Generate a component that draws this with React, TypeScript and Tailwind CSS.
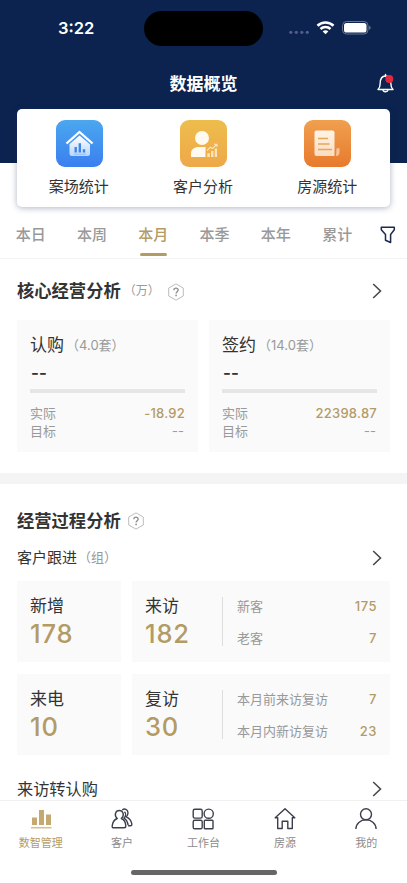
import { ReactNode } from "react"
import clsx from "clsx"

const periods = ["本日", "本周", "本月", "本季", "本年", "累计"]

const coreStats = [
  { title: "认购", count: "4.0套", total: "--", actual: "-18.92", target: "--" },
  { title: "签约", count: "14.0套", total: "--", actual: "22398.87", target: "--" },
]

const followStats = [
  {
    single: { label: "新增", value: "178" },
    main: { label: "来访", value: "182" },
    rows: [
      { label: "新客", value: "175" },
      { label: "老客", value: "7" },
    ],
  },
  {
    single: { label: "来电", value: "10" },
    main: { label: "复访", value: "30" },
    rows: [
      { label: "本月前来访复访", value: "7" },
      { label: "本月内新访复访", value: "23" },
    ],
  },
]

const StatusBar = () => (
  <div className="grid h-[56px] grid-cols-[144px_119px_1fr] text-white">
    <div className="pl-[58px] pt-[17px] text-[16.5px] font-semibold leading-[22px]">3:22</div>
    <div className="mt-[11px] h-[35px] rounded-full bg-black" />
    <div className="flex items-start pl-[26px] pt-[20px]">
      <svg width="21" height="16" viewBox="0 0 21 16" fill="#50608a">
        <circle cx="1.8" cy="12.3" r="1.6" />
        <circle cx="7.3" cy="12.3" r="1.6" />
        <circle cx="12.8" cy="12.3" r="1.6" />
        <circle cx="18.3" cy="12.3" r="1.6" />
      </svg>
      <svg className="ml-[6px]" width="20" height="16" viewBox="0 0 20 16" fill="none" stroke="#fff" strokeWidth="2.6">
        <path d="M1.5 5.7a11.6 11.6 0 0 1 16 0" />
        <path d="M4.5 9a7.2 7.2 0 0 1 10 0" />
        <path d="M9.5 14.2 6.7 11.5a3.8 3.8 0 0 1 5.6 0z" fill="#fff" stroke="none" />
      </svg>
      <svg className="ml-[6px]" width="30" height="16" viewBox="0 0 30 16">
        <rect x="0.5" y="1.5" width="25.5" height="12.5" rx="4" fill="none" stroke="#66738f" />
        <rect x="2" y="3" width="22.5" height="9.5" rx="2.6" fill="#fff" />
        <path d="M27.3 5.8v4c1.6-.6 1.6-3.4 0-4z" fill="#8893ab" />
      </svg>
    </div>
  </div>
)

const BellIcon = () => (
  <svg width="20" height="22" viewBox="0 0 20 22" fill="none" stroke="#fff" strokeWidth="1.4" strokeLinejoin="round" strokeLinecap="round">
    <path d="M2 16.5c1.8-1.6 2.2-3 2.2-6.2 0-4.3 1.8-7.3 5.3-7.3s5.3 3 5.3 7.3c0 3.2.4 4.6 2.2 6.2z" />
    <path d="M9.5 1.5v1.5M7 17c.3 2.3 4.700 2.3 5 0" />
    <circle cx="13.3" cy="6" r="4" fill="#e0293c" stroke="none" />
  </svg>
)

const HouseStatIcon = () => (
  <svg width="47" height="47" viewBox="0 0 47 47">
    <defs>
      <linearGradient id="blue" x1="0" y1="0" x2="0" y2="1">
        <stop offset="0" stopColor="#4ba7ee" />
        <stop offset="1" stopColor="#3a7ff0" />
      </linearGradient>
      <linearGradient id="house" x1="0" y1="0" x2="0" y2="1">
        <stop offset="0" stopColor="#fff" />
        <stop offset="1" stopColor="#b9d6fb" />
      </linearGradient>
    </defs>
    <rect width="47" height="47" rx="9" fill="url(#blue)" />
    <path d="M13.5 24 23.5 15.5 34 24v9.5a2.5 2.5 0 0 1-2.5 2.5H16a2.5 2.5 0 0 1-2.5-2.5z" fill="url(#house)" />
    <path d="M10.3 23.8 23.5 11.5 36.7 23.8" fill="none" stroke="#4a9cf0" strokeWidth="4.5" />
    <path d="M10.5 23.5 23.5 12 36.5 23.5" fill="none" stroke="#fff" strokeWidth="2.3" />
    <path d="M18.5 27h2.4v5.5h-2.4zM22.6 23.3H25v9.2h-2.4zM26.8 29.3h2.4v3.2h-2.4z" fill="#3f86e8" />
    <path d="M18 34.2h12" stroke="#8fbcf6" strokeWidth="0.9" />
  </svg>
)

const CustomerIcon = () => (
  <svg width="47" height="47" viewBox="0 0 47 47">
    <defs>
      <linearGradient id="yellow" x1="0" y1="0" x2="0" y2="1">
        <stop offset="0" stopColor="#edbd4c" />
        <stop offset="1" stopColor="#efa849" />
      </linearGradient>
    </defs>
    <rect width="47" height="47" rx="9" fill="url(#yellow)" />
    <circle cx="22" cy="18" r="7" fill="#fffaf0" />
    <path d="M11 37v-3.5c0-4.3 3.2-6.5 8-6.5h6.5v10z" fill="#fffaf0" />
    <path d="M27.3 33.3h2.5V37h-2.5zM31 31h2.5v6H31zM34.7 28.5h2.3V37h-2.3z" fill="#fbe4b9" />
    <path d="m27 30.5 3.5-3.3 2 1.3 4.2-4M34 24.3h3v2.8" fill="none" stroke="#fbe4b9" strokeWidth="1.1" />
  </svg>
)

const ListingIcon = () => (
  <svg width="47" height="47" viewBox="0 0 47 47">
    <defs>
      <linearGradient id="orange" x1="0" y1="0" x2="0" y2="1">
        <stop offset="0" stopColor="#efa04f" />
        <stop offset="1" stopColor="#e87a2c" />
      </linearGradient>
      <linearGradient id="paper" x1="0" y1="0" x2="0" y2="1">
        <stop offset="0" stopColor="#fff4e6" />
        <stop offset="1" stopColor="#fbdcc0" />
      </linearGradient>
    </defs>
    <rect width="47" height="47" rx="9" fill="url(#orange)" />
    <path d="M12.5 10.5h16a2 2 0 0 1 2 2V36h-18a2 2 0 0 1-2-2V12.500a2 2 0 0 1 2-2z" fill="url(#paper)" />
    <path d="M32.5 28.2h3v3.800c0 2.500-1 4-3.500 4z" fill="#f7c398" />
    <path d="M14 18.5h10M14 24h11.5M14 29.5h14" stroke="#e5a65c" strokeWidth="1.3" />
  </svg>
)

const shortcuts = [
  { label: "案场统计", icon: <HouseStatIcon /> },
  { label: "客户分析", icon: <CustomerIcon /> },
  { label: "房源统计", icon: <ListingIcon /> },
]

const FilterIcon = () => (
  <svg width="16" height="18" viewBox="0 0 16 18" fill="none" stroke="#1c2a4d" strokeWidth="1.5" strokeLinejoin="round">
    <path d="M1.3 1.2h13v2.6L10.6 8.5v8L5.5 14.3V8.5L1.3 3.8z" />
  </svg>
)

const HelpIcon = () => (
  <svg width="18" height="18" viewBox="0 0 18 18" fill="none">
    <path d="M9 .9 16.300 5v8L9 17.100 1.700 13V5z" stroke="#b5b5b5" strokeWidth="0.9" strokeLinejoin="round" />
    <path d="M6.900 7.200c0-2.700 4.300-2.700 4.300-.1 0 1.500-2.100 1.600-2.100 3.300" stroke="#8c8c8c" strokeWidth="1.3" />
    <circle cx="9.1" cy="12.4" r="0.85" fill="#8c8c8c" />
  </svg>
)

const Chevron = () => (
  <svg className="ml-auto" width="10" height="16" viewBox="0 0 10 16" fill="none" stroke="#4a4a4a" strokeWidth="1.6">
    <path d="m1.200 1 7.300 7-7.300 7" />
  </svg>
)

const ChartTabIcon = () => (
  <svg width="24" height="24" viewBox="0 0 24 24">
    <path d="M3 10.5h5V18H3zM10 3h5v15h-5zM17 7.5h5V18h-5z" fill="#c4a970" />
    <path d="M2 20.8h20.5" stroke="#c9b07c" strokeWidth="1.2" />
  </svg>
)

const CustomersTabIcon = () => (
  <svg width="24" height="24" viewBox="0 0 24 24" fill="none" stroke="#3c404c" strokeWidth="1.4" strokeLinejoin="round">
    <path d="M7.3 11.5C3.8 8.5 5.3 3.500 9.300 3.500s5.500 5 2 8c3 1.200 4.400 4 4.500 7.500 0 1.300-.6 1.800-1.800 1.800H3.800c-1.200 0-1.800-.5-1.600-1.700.4-3.600 2-6.600 5.100-7.600z" />
    <path d="M12.3 3c1.200-1.200 2.400-1.200 3.600-.7 2.800 1.300 2.600 5.300.4 7.600 3.300 1.500 5 4 5.500 7 .2 1.300-.3 1.800-1.400 1.800h-2.300M14.500 4.800c1.600 1.700 1.400 4.400-.6 6.300 2.500 1.500 3.800 4 4.200 7" />
  </svg>
)

const WorkbenchTabIcon = () => (
  <svg width="24" height="24" viewBox="0 0 24 24" fill="none" stroke="#3c404c" strokeWidth="1.4">
    <rect x="2.2" y="2.3" width="9" height="8.8" rx="1.6" />
    <circle cx="17.7" cy="6.7" r="4.6" />
    <rect x="2.2" y="13.2" width="9" height="8.6" rx="1.6" />
    <rect x="13.3" y="13.2" width="8.7" height="8.6" rx="0.8" />
  </svg>
)

const HomeTabIcon = () => (
  <svg width="24" height="24" viewBox="0 0 24 24" fill="none" stroke="#3c404c" strokeWidth="1.4" strokeLinejoin="round">
    <path d="m2.2 10.8 9.8-9 9.8 9h-2.500v10.700h-4.500v-7.300H9.200v7.300H4.700V10.800z" />
  </svg>
)

const MineTabIcon = () => (
  <svg width="24" height="24" viewBox="0 0 24 24" fill="none" stroke="#3c404c" strokeWidth="1.4">
    <circle cx="12" cy="7.3" r="5.5" />
    <path d="M1.9 22c0-5.300 4.500-9.200 10.100-9.200S22.100 16.700 22.100 22" />
  </svg>
)

const navItems = [
  { label: "数智管理", icon: <ChartTabIcon />, active: true },
  { label: "客户", icon: <CustomersTabIcon /> },
  { label: "工作台", icon: <WorkbenchTabIcon /> },
  { label: "房源", icon: <HomeTabIcon /> },
  { label: "我的", icon: <MineTabIcon /> },
]

const Unit = ({ children, small }: { children: ReactNode; small?: boolean }) => (
  <span className={clsx("font-normal text-[#999]", small ? "text-[12px]" : "text-[13px]")}>{children}</span>
)

const StatBlock = ({ label, value }: { label: string; value: string }) => (
  <>
    <div className="text-[17px] leading-[24px]">{label}</div>
    <div className="text-[25.5px] font-medium leading-[32px] tracking-[0.8px] text-[#b39b66]">{value}</div>
  </>
)

export default function App() {
  return (
    <div
      className="flex h-[883px] w-[407px] flex-col overflow-hidden bg-white text-[#333]"
      style={{ fontFamily: 'Inter, "Noto Sans CJK SC", sans-serif' }}
    >
      <header className="h-[163px] shrink-0 bg-[#0b234e]">
        <StatusBar />
        <div className="grid h-[55px] grid-cols-[1fr_auto_1fr] items-center pr-[11px]">
          <span />
          <h1 className="pl-[11px] pt-px text-[17px] font-bold leading-6 text-white">数据概览</h1>
          <div className="flex justify-end">
            <BellIcon />
          </div>
        </div>
      </header>

      <div className="relative mx-[17px] -mt-[54px] grid h-[98px] shrink-0 grid-cols-3 rounded-[5px] bg-white shadow-[0_1px_6px_rgba(30,40,90,0.35)]">
        {shortcuts.map((item) => (
          <div key={item.label} className="flex flex-col items-center pt-[11px]">
            {item.icon}
            <span className="mt-[9px] pr-px text-[15px] leading-[22px]">{item.label}</span>
          </div>
        ))}
      </div>

      <div className="flex h-[52px] shrink-0 items-start border-b border-[#f3f3f3] pr-[11px]">
        {periods.map((period) => {
          const active = period === "本月"
          return (
            <div
              key={period}
              className={clsx(
                "flex w-[61.3px] flex-col items-center pt-[17px] text-[15px] font-medium leading-[22px]",
                active ? "text-[#b39b66]" : "text-[#999]"
              )}
            >
              {period}
              {active && <div className="mt-[7px] h-[3px] w-[27px] rounded-full bg-[#b39b66]" />}
            </div>
          )
        })}
        <div className="ml-auto pt-[19px]">
          <FilterIcon />
        </div>
      </div>

      <section className="shrink-0 pl-[17px] pr-[17px]">
        <div className="flex h-[61px] items-center pr-[8px] pt-[3px]">
          <h2 className="mr-[3px] text-[17.3px] font-bold leading-6">核心经营分析</h2>
          <Unit small>（万）</Unit>
          <span className="ml-[7px] pt-px">
            <HelpIcon />
          </span>
          <Chevron />
        </div>
        <div className="grid grid-cols-2 gap-[11px]">
          {coreStats.map((stat) => (
            <div key={stat.title} className="h-[132px] bg-[#fafafa] px-[13px] pt-[14px]">
              <div className="flex h-[24px] items-center gap-[2px]">
                <span className="text-[17px]">{stat.title}</span>
                <Unit>（{stat.count}）</Unit>
              </div>
              <div className="mt-[3px] h-[24px] pl-px text-[17px] font-semibold leading-[24px]">{stat.total}</div>
              <div className="mt-[4px] h-[4px] bg-[#e6e6e6]" />
              <dl className="mt-[11px] text-[13px] leading-[18px] text-[#999]">
                <div className="flex justify-between">
                  <dt>实际</dt>
                  <dd className="font-medium tracking-[0.25px] text-[#b39b66]">{stat.actual}</dd>
                </div>
                <div className="flex justify-between">
                  <dt>目标</dt>
                  <dd className="pr-px text-[#b39b66]">{stat.target}</dd>
                </div>
              </dl>
            </div>
          ))}
        </div>
      </section>

      <div className="mt-[21px] h-[11px] shrink-0 bg-[#f4f4f4]" />

      <section className="min-h-0 flex-1 overflow-hidden px-[17px]">
        <div className="flex h-[54px] items-center pt-[20px]">
          <h2 className="text-[17.3px] font-bold leading-6">经营过程分析</h2>
          <span className="ml-[6px]">
            <HelpIcon />
          </span>
        </div>
        <div className="flex h-[39px] items-center pr-[8px] pt-px">
          <h3 className="mr-[1px] text-[15px]">客户跟进</h3>
          <Unit>（组）</Unit>
          <Chevron />
        </div>
        <div className="mt-[4px] flex flex-col gap-[12px]">
          {followStats.map((group) => (
            <div key={group.single.label} className="grid h-[81px] grid-cols-[104px_1fr] gap-[11px]">
              <div className="bg-[#fafafa] pl-[13px] pt-[13px]">
                <StatBlock label={group.single.label} value={group.single.value} />
              </div>
              <div className="flex bg-[#fafafa] pr-[13px]">
                <div className="w-[90px] pl-[13px] pt-[13px]">
                  <StatBlock label={group.main.label} value={group.main.value} />
                </div>
                <div className="my-[16px] w-px bg-[#dedede]" />
                <div className="flex flex-1 flex-col gap-[12px] pl-[14px] pt-[15px] text-[13px] leading-[20px] text-[#999]">
                  {group.rows.map((row) => (
                    <div key={row.label} className="flex justify-between">
                      <span>{row.label}</span>
                      <span className="font-medium tracking-[0.5px] text-[#b39b66]">{row.value}</span>
                    </div>
                  ))}
                </div>
              </div>
            </div>
          ))}
        </div>
        <div className="mt-[22px] flex h-[24px] items-center pr-[8px]">
          <h3 className="text-[16.2px] leading-6">来访转认购</h3>
          <Chevron />
        </div>
      </section>

      <nav className="h-[83px] shrink-0 border-t border-[#f0f0f0] bg-white">
        <div className="grid grid-cols-5 pt-[6px]">
          {navItems.map((item) => (
            <div key={item.label} className="flex flex-col items-center">
              {item.icon}
              <span className={clsx("mt-[3px] text-[11px] leading-[18px]", item.active ? "text-[#b39b66]" : "text-[#8c8c8c]")}>
                {item.label}
              </span>
            </div>
          ))}
        </div>
        <div className="mx-auto mt-[18px] h-[5px] w-[146px] rounded-full bg-[#666]" />
      </nav>
    </div>
  )
}
